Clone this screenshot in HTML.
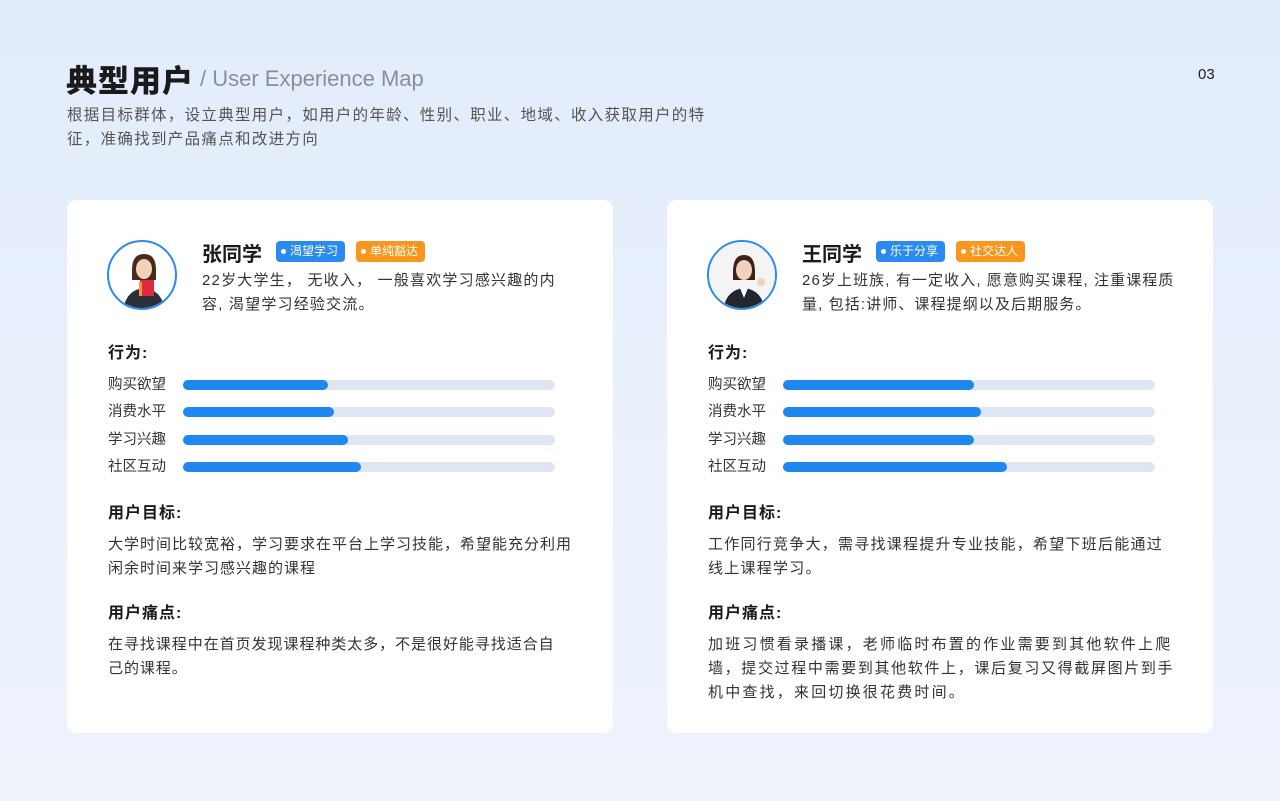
<!DOCTYPE html>
<html><head><meta charset="utf-8"><style>
*{margin:0;padding:0;box-sizing:border-box}
body{width:1280px;height:801px;overflow:hidden;background:linear-gradient(180deg,#e2ecfb 0%,#eaf1fc 60%,#eef3fc 100%);font-family:"Liberation Sans","Noto Sans CJK SC",sans-serif;position:relative;color:#222}
h1{position:absolute;left:66px;top:56px;font-size:31px;font-weight:900;color:#1a1a1a;letter-spacing:1px}
.sub{position:absolute;left:200px;top:66px;font-size:22px;color:#8a8f98}
.intro{position:absolute;left:67px;top:104px;font-size:15.5px;line-height:24px;color:#555;white-space:nowrap;letter-spacing:1.3px}
.num{position:absolute;left:1198px;top:66px;font-size:15px;color:#222}
.card{position:absolute;top:200px;width:546px;height:533px;background:#fff;border-radius:10px}
.av{position:absolute;left:40px;top:40px;width:70px;height:70px;border-radius:50%;border:2px solid #2a8af0;overflow:hidden;background:#fff}
.name{position:absolute;left:135px;top:38px;font-size:20px;font-weight:bold;color:#1a1a1a}
.tag{position:absolute;top:41px;height:21px;border-radius:4px;color:#fff;font-size:12px;line-height:21px;padding:0 7px 0 14px}
.tag:before{content:"";position:absolute;left:5px;top:8px;width:5px;height:5px;border-radius:50%;background:#fff}
.blue{background:#2a8af0}.org{background:#f8961e}
.desc{position:absolute;left:135px;top:69px;white-space:nowrap;font-size:15px;line-height:24px;color:#333;letter-spacing:1.2px}
.h{position:absolute;left:41px;font-size:16px;font-weight:bold;color:#1a1a1a;letter-spacing:1px}
.row{position:absolute;left:41px;font-size:14.5px;color:#333;height:20px;line-height:20px}
.bar{position:absolute;left:75px;top:5px;width:372px;height:10px;border-radius:5px;background:#dfe6f1}
.bar i{display:block;height:10px;border-radius:5px;background:#1e88f0}
.p{position:absolute;left:41px;white-space:nowrap;font-size:15px;line-height:24px;color:#333;letter-spacing:1px}
</style></head><body>
<h1>典型用户</h1>
<div class="sub">/ User Experience Map</div>
<div class="num">03</div>
<div class="intro">根据目标群体，设立典型用户，如用户的年龄、性别、职业、地域、收入获取用户的特<br>征，准确找到产品痛点和改进方向</div>

<div class="card" style="left:67px">
 <div class="av"><svg width="70" height="70" viewBox="0 0 70 70"><path d="M23 28q0-16 12-16t12 16v10h-24z" fill="#4a2a1a"/><ellipse cx="35" cy="27" rx="8" ry="10" fill="#f3d2bd"/><path d="M14 70q2-22 21-24q19 2 21 24z" fill="#2b2f3a"/><rect x="31" y="38" width="14" height="16" fill="#e0283f"/><rect x="30" y="40" width="3" height="14" fill="#f29a38"/></svg></div>
 <div class="name">张同学</div>
 <div class="tag blue" style="left:209px">渴望学习</div>
 <div class="tag org" style="left:289px">单纯豁达</div>
 <div class="desc">22岁大学生， 无收入， 一般喜欢学习感兴趣的内<br>容, 渴望学习经验交流。</div>
 <div class="h" style="top:139px">行为:</div>
 <div class="row" style="top:175px">购买欲望<div class="bar"><i style="width:145px"></i></div></div>
 <div class="row" style="top:202px">消费水平<div class="bar"><i style="width:151px"></i></div></div>
 <div class="row" style="top:230px">学习兴趣<div class="bar"><i style="width:165px"></i></div></div>
 <div class="row" style="top:257px">社区互动<div class="bar"><i style="width:178px"></i></div></div>
 <div class="h" style="top:299px">用户目标:</div>
 <div class="p" style="top:333px">大学时间比较宽裕，学习要求在平台上学习技能，希望能充分利用<br>闲余时间来学习感兴趣的课程</div>
 <div class="h" style="top:399px">用户痛点:</div>
 <div class="p" style="top:433px;letter-spacing:0.95px">在寻找课程中在首页发现课程种类太多，不是很好能寻找适合自<br>己的课程。</div>
</div>

<div class="card" style="left:667px">
 <div class="av"><svg width="70" height="70" viewBox="0 0 70 70"><rect width="70" height="70" fill="#f4f4f4"/><path d="M24 30q0-17 11-17t11 17v8h-22z" fill="#3a2418"/><ellipse cx="35" cy="28" rx="8" ry="10" fill="#f3d2bd"/><path d="M14 70q2-22 21-24q19 2 21 24z" fill="#23262e"/><path d="M31 46l4 10 4-10z" fill="#fff"/><circle cx="52" cy="40" r="4" fill="#f3d2bd"/></svg></div>
 <div class="name">王同学</div>
 <div class="tag blue" style="left:209px">乐于分享</div>
 <div class="tag org" style="left:289px">社交达人</div>
 <div class="desc" style="letter-spacing:1.1px">26岁上班族, 有一定收入, 愿意购买课程, 注重课程质<br>量, 包括:讲师、课程提纲以及后期服务。</div>
 <div class="h" style="top:139px">行为:</div>
 <div class="row" style="top:175px">购买欲望<div class="bar"><i style="width:191px"></i></div></div>
 <div class="row" style="top:202px">消费水平<div class="bar"><i style="width:198px"></i></div></div>
 <div class="row" style="top:230px">学习兴趣<div class="bar"><i style="width:191px"></i></div></div>
 <div class="row" style="top:257px">社区互动<div class="bar"><i style="width:224px"></i></div></div>
 <div class="h" style="top:299px">用户目标:</div>
 <div class="p" style="top:333px;letter-spacing:1.25px">工作同行竞争大，需寻找课程提升专业技能，希望下班后能通过<br>线上课程学习。</div>
 <div class="h" style="top:399px">用户痛点:</div>
 <div class="p" style="top:433px;letter-spacing:2.2px">加班习惯看录播课，老师临时布置的作业需要到其他软件上爬<br><span style="letter-spacing:1.65px">墙，提交过程中需要到其他软件上，课后复习又得截屏图片到手</span><br>机中查找，来回切换很花费时间。</div>
</div>
</body></html>
